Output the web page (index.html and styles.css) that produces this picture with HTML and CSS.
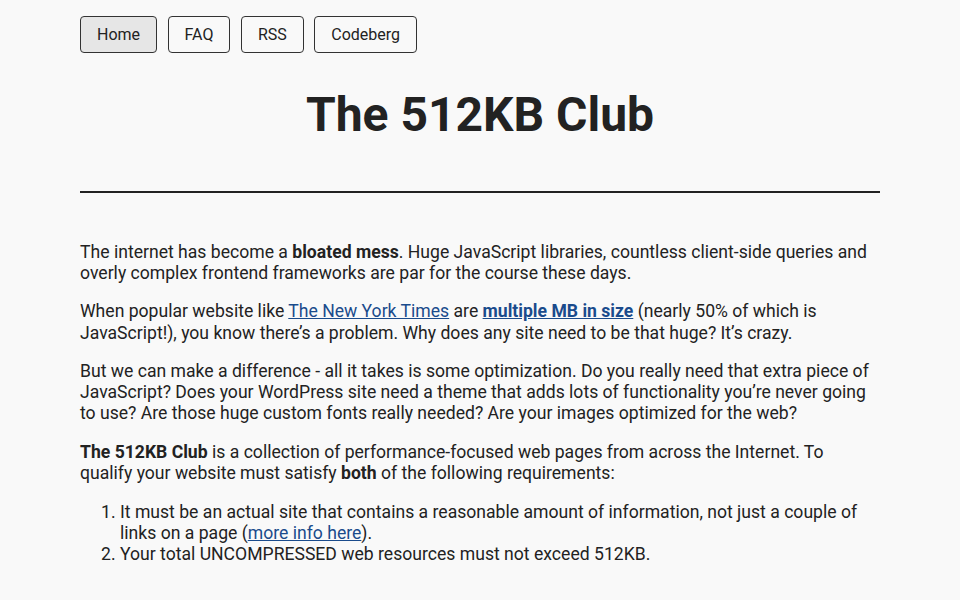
FILE: index.html
```html
<!DOCTYPE html>
<html lang="en">

<head>
    <meta charset="UTF-8">
    <meta name="viewport" content="width=device-width, initial-scale=1.0">
    <title>The 512KB Club</title>
    <link rel="stylesheet" href="styles.css">
</head>

<body>
    <div class="page">
        <nav class="nav">
            <a class="btn active" href="#">Home</a>
            <a class="btn" href="#">FAQ</a>
            <a class="btn" href="#">RSS</a>
            <a class="btn" href="#">Codeberg</a>
        </nav>

        <h1 class="title">The 512KB Club</h1>
        <hr class="rule">

        <main class="content">
            <p>The internet has become a <strong>bloated mess</strong>. Huge JavaScript libraries, countless client-side queries and overly complex frontend frameworks are par for the course these days.</p>
            <p>When popular website like <a href="#">The New York Times</a> are <a href="#"><strong>multiple MB in size</strong></a> (nearly 50% of which is JavaScript!), you know there’s a problem. Why does any site need to be that huge? It’s crazy.</p>
            <p>But we can make a difference - all it takes is some optimization. Do you really need that extra piece of JavaScript? Does your WordPress site need a theme that adds lots of functionality you’re never going to use? Are those huge custom fonts really needed? Are your images optimized for the web?</p>
            <p><strong>The 512KB Club</strong> is a collection of performance-focused web pages from across the Internet. To qualify your website must satisfy <strong>both</strong> of the following requirements:</p>
            <ol>
                <li>It must be an actual site that contains a reasonable amount of information, not just a couple of links on a page (<a href="#">more info here</a>).</li>
                <li>Your total UNCOMPRESSED web resources must not exceed 512KB.</li>
            </ol>
        </main>
    </div>
</body>

</html>
```

FILE: styles.css
```css
* {
    margin: 0;
    padding: 0;
    box-sizing: border-box;
}

body {
    background-color: #f9f9f9;
    color: #222;
    font-family: Roboto, "Liberation Sans", sans-serif;
    font-size: 17.6px;
    line-height: 1.2;
}

.page {
    width: 800px;
    margin: 0 auto;
    padding-top: 16px;
}

.nav {
    display: flex;
    gap: 10.5px;
}

.nav .btn {
    display: block;
    height: 37px;
    padding: 0 16px;
    line-height: 35px;
    font-size: 16px;
    color: #222;
    text-decoration: none;
    border: 1px solid #333;
    border-radius: 4px;
    background-color: #f9f9f9;
}

.nav .active {
    background-color: #e6e6e6;
}

.title {
    margin-top: 33px;
    text-align: center;
    font-size: 48px;
    font-weight: 700;
    line-height: 1.2;
}

.rule {
    margin-top: 47px;
    border: none;
    border-top: 2px solid #222;
}

.content {
    padding-top: 49px;
}

.content p {
    margin-bottom: 1em;
}

.content a {
    color: #1a4b8c;
}

.content ol {
    padding-left: 40px;
}
```
